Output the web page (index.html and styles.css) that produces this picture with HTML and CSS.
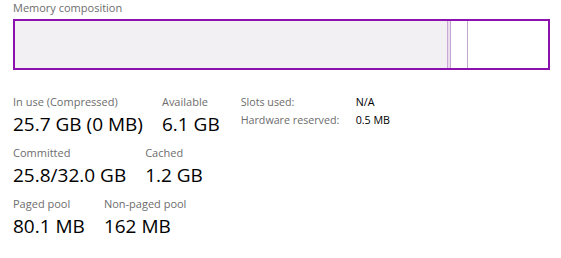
FILE: index.html
```html
<!DOCTYPE html>
<html lang="en">
<head>
  <meta charset="UTF-8" />
  <title>Memory</title>
  <link rel="stylesheet" href="styles.css">
</head>
<body>

  <div class="panel">
    <div class="title">Memory composition</div>
    <div class="bar">
      <div class="seg in-use" style="width: 432px;"></div>
      <div class="seg modified" style="width: 2px;"></div>
      <div class="seg standby" style="width: 16px;"></div>
      <div class="seg free"></div>
    </div>

    <div class="stats">
      <div class="top-row">
        <div class="row">
          <div class="stat">
            <div class="label">In use (Compressed)</div>
            <div class="value">25.7 GB (0 MB)</div>
          </div>
          <div class="stat">
            <div class="label">Available</div>
            <div class="value">6.1 GB</div>
          </div>
        </div>
        <div class="details">
          <div class="detail-label">Slots used:</div>
          <div class="detail-value">N/A</div>
          <div class="detail-label">Hardware reserved:</div>
          <div class="detail-value">0.5 MB</div>
        </div>
      </div>
      <div class="row">
        <div class="stat">
          <div class="label">Committed</div>
          <div class="value">25.8/32.0 GB</div>
        </div>
        <div class="stat">
          <div class="label">Cached</div>
          <div class="value">1.2 GB</div>
        </div>
      </div>
      <div class="row">
        <div class="stat">
          <div class="label">Paged pool</div>
          <div class="value">80.1 MB</div>
        </div>
        <div class="stat">
          <div class="label">Non-paged pool</div>
          <div class="value">162 MB</div>
        </div>
      </div>
    </div>
  </div>

</body>
</html>
```

FILE: styles.css
```css
body {
  margin: 0;
  background: white;
  font-family: 'Open Sans', sans-serif;
  color: #000;
}

.panel {
  padding: 0 11px 0 13px;
}

.title {
  font-size: 11px;
  line-height: 15px;
  color: #6d6d6d;
}

.bar {
  display: flex;
  height: 47px;
  margin-top: 4px;
  border: 2px solid #8b12ae;
  width: 533px;
}

.seg {
  height: 100%;
  border-right: 1px solid #cba5d6;
}

.in-use {
  background: #f3f0f4;
}

.modified {
  background: #e9dcee;
}

.standby {
  background: white;
  border-right-color: #c4a7cc;
}

.free {
  flex: 1;
  border-right: none;
}

.stats {
  margin-top: 24px;
}

.top-row {
  display: flex;
  align-items: flex-start;
  gap: 21px;
}

.row {
  display: flex;
  gap: 19px;
  height: 51px;
}

.label {
  font-size: 11px;
  line-height: 15px;
  color: #6d6d6d;
}

.value {
  font-size: 19px;
  line-height: 26px;
  margin-top: 2px;
}

.details {
  display: grid;
  grid-template-columns: 115px auto;
  font-size: 10.7px;
  line-height: 18px;
  margin-top: -1px;
}

.detail-label {
  color: #6d6d6d;
}
```
